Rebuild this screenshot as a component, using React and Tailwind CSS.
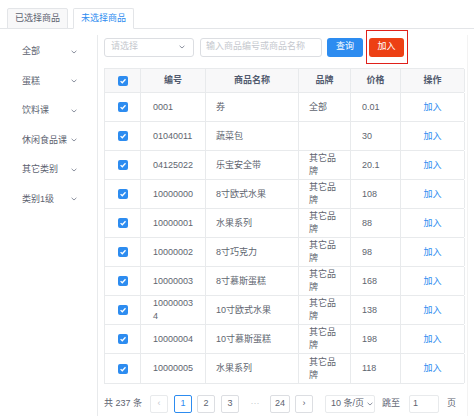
import React from 'react';

const rows = [
    ['0001', '券', '全部', '0.01'],
    ['01040011', '蔬菜包', '', '30'],
    ['04125022', '乐宝安全带', '其它品牌', '20.1'],
    ['10000000', '8寸欧式水果', '其它品牌', '108'],
    ['10000001', '水果系列', '其它品牌', '88'],
    ['10000002', '8寸巧克力', '其它品牌', '98'],
    ['10000003', '8寸慕斯蛋糕', '其它品牌', '168'],
    ['100000034', '10寸欧式水果', '其它品牌', '138'],
    ['10000004', '10寸慕斯蛋糕', '其它品牌', '198'],
    ['10000005', '水果系列', '其它品牌', '118'],
];

const categories = ['全部', '蛋糕', '饮料课', '休闲食品课', '其它类别', '类别1级'];

const Chevron = ({ className = '' }) => (
    <svg width="6" height="4" viewBox="0 0 6 4" className={className}>
        <path d="M0.6 0.8 L3 3 L5.4 0.8" fill="none" stroke="#808695" strokeWidth="0.9" />
    </svg>
);

const Checkbox = () => (
    <span className="w-[10px] h-[10px] rounded-[2px] bg-[#2d8cf0] flex items-center justify-center">
        <svg width="10" height="10" viewBox="0 0 10 10">
            <path d="M2.6 5.1 L4.3 6.8 L7.5 3.3" fill="none" stroke="#fff" strokeWidth="1.3" />
        </svg>
    </span>
);

const cols = 'grid grid-cols-[36px_65px_93px_52px_50px_64px]';
const cell = 'border-r border-[#e8eaec] flex items-center';

const App = () => {
    return (
        <div className="w-[474px] h-[416px] bg-white overflow-hidden text-[9px] text-[#5c6270] font-['Liberation_Sans','Noto_Sans_CJK_SC',sans-serif]">
            {/* Tabs */}
            <div className="flex pt-[8px] pl-[7px] border-b border-[#e3e5e8] h-[29px]">
                <div className="w-[61px] h-[21px] border border-[#e3e5e8] bg-[#f8f8f9] flex items-center justify-center rounded-t-[2px]">
                    已选择商品
                </div>
                <div className="ml-[5px] w-[61px] h-[21px] border border-[#e3e5e8] border-b-white bg-white flex items-center justify-center text-[#2d8cf0] rounded-t-[2px]">
                    未选择商品
                </div>
            </div>

            <div className="flex mt-[6px] h-[381px]">
                {/* Sidebar */}
                <div className="w-[98px] border-r border-[#e8eaec] pt-[2px]">
                    {categories.map((c) => (
                        <div key={c} className="h-[29.5px] flex items-center justify-between pl-[22px] pr-[20px]">
                            <span>{c}</span>
                            <Chevron />
                        </div>
                    ))}
                </div>

                {/* Content */}
                <div className="w-[370px] border-r border-[#f3f3f3] pl-[6px] pt-[2px]">
                    <div className="flex items-center h-[20px]">
                        <div className="w-[90px] h-[19px] border border-[#dcdee2] rounded-[3px] flex items-center justify-between pl-[6px] pr-[8px] text-[#c5c8ce]">
                            <span>请选择</span>
                            <Chevron />
                        </div>
                        <div className="ml-[6px] w-[122px] h-[19px] border border-[#dcdee2] rounded-[3px] flex items-center pl-[5px] text-[#c5c8ce]">
                            输入商品编号或商品名称
                        </div>
                        <button className="ml-[5px] w-[36px] h-[19px] rounded-[3px] bg-[#2d8cf0] text-white flex items-center justify-center">
                            查询
                        </button>
                        <div className="relative ml-[6px]">
                            <button className="w-[35px] h-[19px] rounded-[3px] bg-[#ed4014] text-white flex items-center justify-center">
                                加入
                            </button>
                            <div className="absolute left-[-3px] right-[-4px] top-[-8px] bottom-[-7px] border-[1.5px] border-[#e0201a]" />
                        </div>
                    </div>

                    {/* Table */}
                    <div className="mt-[11px] w-[360px] border border-[#e8eaec] border-r-0">
                        <div className={`${cols} h-[24px] bg-[#f8f8f9] border-b border-[#e8eaec] font-bold text-[#515a6e]`}>
                            <div className={`${cell} justify-center`}><Checkbox /></div>
                            <div className={`${cell} justify-center`}>编号</div>
                            <div className={`${cell} justify-center`}>商品名称</div>
                            <div className={`${cell} justify-center`}>品牌</div>
                            <div className={`${cell} justify-center`}>价格</div>
                            <div className={`${cell} justify-center`}>操作</div>
                        </div>
                        {rows.map((r, i) => (
                            <div key={i} className={`${cols} h-[29px] border-b border-[#e8eaec] last:border-b-0 leading-[13px] text-[#60656f]`}>
                                <div className={`${cell} justify-center`}><Checkbox /></div>
                                <div className={`${cell} pl-[12px] pr-[10px] break-all`}>{r[0]}</div>
                                <div className={`${cell} pl-[10px] pr-[6px]`}>{r[1]}</div>
                                <div className={`${cell} pl-[10px] pr-[10px]`}>{r[2]}</div>
                                <div className={`${cell} pl-[11px]`}>{r[3]}</div>
                                <div className={`${cell} justify-center text-[#2d8cf0]`}>加入</div>
                            </div>
                        ))}
                    </div>

                    {/* Pagination */}
                    <div className="flex items-center mt-[11px] h-[18px]">
                        <span className="whitespace-nowrap">共 237 条</span>
                        <div className="ml-[8px] w-[18px] h-[18px] border border-[#e8eaec] rounded-[2px] flex items-center justify-center text-[#c5c8ce]">‹</div>
                        <div className="ml-[6px] w-[18px] h-[18px] border border-[#2d8cf0] rounded-[2px] flex items-center justify-center text-[#2d8cf0]">1</div>
                        <div className="ml-[5px] w-[18px] h-[18px] border border-[#dcdee2] rounded-[2px] flex items-center justify-center">2</div>
                        <div className="ml-[6px] w-[18px] h-[18px] border border-[#dcdee2] rounded-[2px] flex items-center justify-center">3</div>
                        <div className="ml-[6px] w-[20px] h-[18px] flex items-center justify-center text-[#c5c8ce]">···</div>
                        <div className="ml-[5px] w-[20px] h-[18px] border border-[#dcdee2] rounded-[2px] flex items-center justify-center">24</div>
                        <div className="ml-[5px] w-[18px] h-[18px] border border-[#dcdee2] rounded-[2px] flex items-center justify-center">›</div>
                        <div className="ml-[12px] w-[50px] h-[18px] border border-[#e8eaec] rounded-[2px] flex items-center pl-[5px] whitespace-nowrap">
                            <span>10 条/页</span>
                            <Chevron className="ml-[3px]" />
                        </div>
                        <span className="ml-[7px] whitespace-nowrap">跳至</span>
                        <div className="ml-[9px] w-[30px] h-[18px] border border-[#e8eaec] rounded-[2px] flex items-center pl-[3px]">1</div>
                        <span className="ml-[8px]">页</span>
                    </div>
                </div>
            </div>
        </div>
    );
};

export default App;
